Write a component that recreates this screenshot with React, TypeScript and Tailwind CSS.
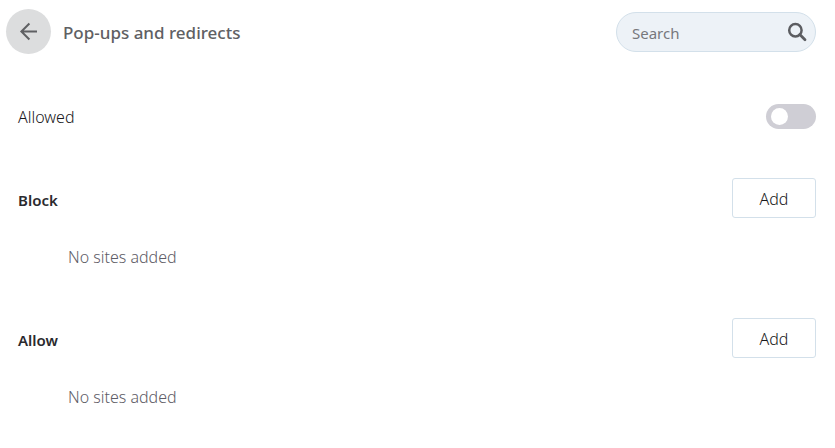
import React from 'react';

interface SiteSectionProps {
  title: string;
  sites: string[];
  onAdd: () => void;
}

const SiteSection: React.FC<SiteSectionProps> = ({ title, sites, onAdd }) => (
  <section className="pb-[51px]">
    <div className="flex items-center justify-between">
      <h2 className="pt-1 text-[15px] leading-5 font-semibold text-[#2a2a2e]">{title}</h2>
      <button
        type="button"
        onClick={onAdd}
        className="h-10 min-w-[84px] rounded-[3px] border border-[#d3e0ea] bg-white px-4 pt-0.5 text-[#18181b] hover:bg-gray-50"
      >
        Add
      </button>
    </div>

    <div className="pt-[29px] pl-[50px] text-[#5e5c66]">
      {sites.length === 0 ? (
        <p>No sites added</p>
      ) : (
        <ul>
          {sites.map((site, index) => (
            <li key={index}>{site}</li>
          ))}
        </ul>
      )}
    </div>
  </section>
);

const App: React.FC = () => {
  const [allowed, setAllowed] = React.useState(false);
  const [query, setQuery] = React.useState('');
  const [blockedSites, setBlockedSites] = React.useState<string[]>([]);
  const [allowedSites, setAllowedSites] = React.useState<string[]>([]);

  return (
    <main className="bg-white font-['Noto_Sans',sans-serif] text-base leading-5 font-light">
      <header className="flex items-center justify-between pt-[9px] pr-[19px] pl-1.5">
        <div className="flex items-center gap-3">
          <button
            type="button"
            aria-label="Back"
            className="flex size-[45px] items-center justify-center rounded-full bg-[#dcddde] text-[#5f6063]"
          >
            <svg
              className="size-6"
              viewBox="0 0 24 24"
              fill="none"
              stroke="currentColor"
              strokeWidth="2"
            >
              <path d="M20 11.5H4.6M12.4 3.5L4.4 11.5l8 8" />
            </svg>
          </button>
          <h1 className="pt-0.5 text-[17px] leading-5 font-medium text-[#606063]">
            Pop-ups and redirects
          </h1>
        </div>

        <label className="flex h-10 w-[200px] items-center rounded-full border border-[#d3e0ea] bg-[#edf2f7] pr-2 pl-[15px]">
          <input
            type="text"
            aria-label="Search"
            placeholder="Search"
            value={query}
            onChange={(e) => setQuery(e.target.value)}
            className="min-w-0 flex-1 pt-0.5 text-[15px] font-normal outline-none placeholder:text-[#77787c]"
          />
          <svg
            className="size-5 text-[#5c5d61]"
            viewBox="0 0 20 20"
            fill="none"
            stroke="currentColor"
            strokeWidth="2.5"
          >
            <circle cx="8.4" cy="8.2" r="6.2" />
            <path d="M12.8 12.6l5.2 5.2" strokeWidth="2.8" strokeLinecap="round" />
          </svg>
        </label>
      </header>

      <div className="pt-[50px] pr-[19px] pl-[18px]">
        <label className="flex items-center justify-between pb-[49px] text-[#18181b]">
          <span>Allowed</span>
          <input
            type="checkbox"
            role="switch"
            checked={allowed}
            onChange={(e) => setAllowed(e.target.checked)}
            className="flex h-[25px] w-[50px] appearance-none items-center rounded-full bg-[#cfced5] px-[5px] before:size-[17px] before:rounded-full before:bg-white checked:justify-end checked:bg-blue-600"
          />
        </label>

        <SiteSection
          title="Block"
          sites={blockedSites}
          onAdd={() => setBlockedSites([...blockedSites, 'example.com'])}
        />
        <SiteSection
          title="Allow"
          sites={allowedSites}
          onAdd={() => setAllowedSites([...allowedSites, 'example.com'])}
        />
      </div>
    </main>
  );
};

export default App;
